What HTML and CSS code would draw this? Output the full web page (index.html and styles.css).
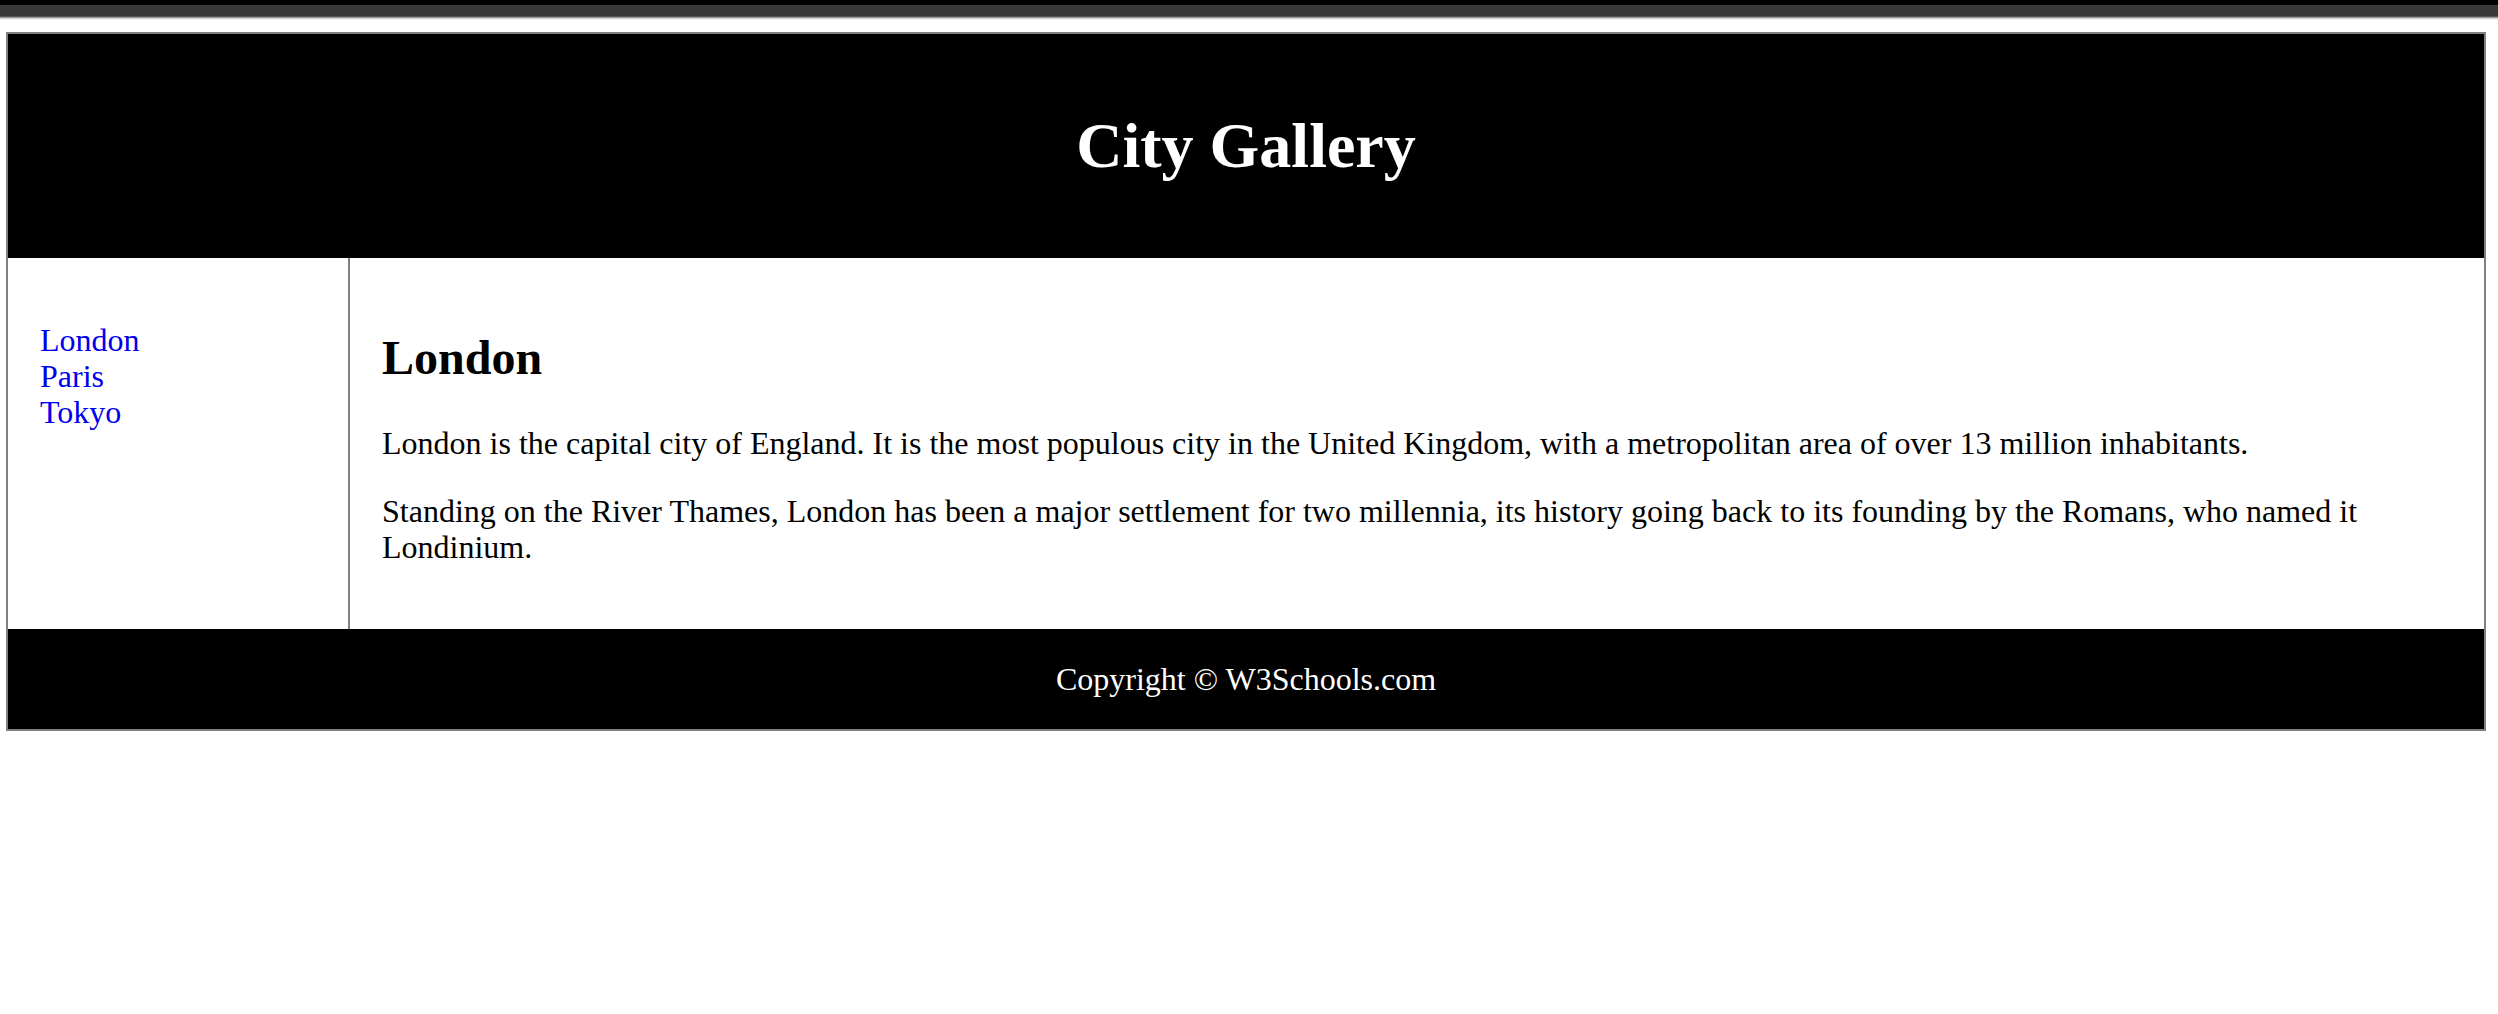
FILE: index.html
```html
<!DOCTYPE html>
<html>
<head>
<meta charset="utf-8">
<title>City Gallery</title>
<link rel="stylesheet" href="styles.css">
</head>
<body>
<div class="chrome"></div>
<div class="container">
  <header class="site-header">
    <h1 class="title">City Gallery</h1>
  </header>
  <div class="main">
    <nav class="side-nav">
      <ul class="nav-list">
        <li><a href="#">London</a></li>
        <li><a href="#">Paris</a></li>
        <li><a href="#">Tokyo</a></li>
      </ul>
    </nav>
    <article class="content">
      <h2 class="heading">London</h2>
      <p class="para">London is the capital city of England. It is the most populous city in the United Kingdom, with a metropolitan area of over 13 million inhabitants.</p>
      <p class="para">Standing on the River Thames, London has been a major settlement for two millennia, its history going back to its founding by the Romans, who named it Londinium.</p>
    </article>
  </div>
  <footer class="site-footer">Copyright © W3Schools.com</footer>
</div>
</body>
</html>
```

FILE: styles.css
```css
html, body {
  margin: 0;
  padding: 0;
  background: #fff;
}
body {
  font-family: "Liberation Serif", "Times New Roman", serif;
  font-size: 32px;
  line-height: 36px;
  color: #000;
}
.chrome {
  height: 20px;
  background: linear-gradient(to bottom,
    #000 0px, #000 5px,
    #393939 5px, #393939 16px,
    #555 16px, #555 17px,
    #9a9a9a 17px, #9a9a9a 18px,
    #d2d2d2 18px, #d2d2d2 19px,
    #f0f0f0 19px, #f0f0f0 20px);
}
.container {
  margin: 12px 12px 0 6px;
  border: 2px solid #808080;
}
.site-header,
.site-footer {
  padding: 32px;
  color: #fff;
  background: #000;
  text-align: center;
}
.title {
  font-size: 64px;
  font-weight: bold;
  margin: 42.88px 0;
  line-height: 74px;
}
.main {
  display: flex;
}
.side-nav {
  width: 340px;
  flex: none;
  padding: 32px;
  box-sizing: border-box;
}
.nav-list {
  list-style: none;
  margin: 32px 0;
  padding: 0;
}
.nav-list a {
  color: #0000ee;
  text-decoration: none;
}
.content {
  flex: 1;
  border-left: 2px solid #808080;
  padding: 32px;
  overflow: hidden;
}
.heading {
  font-size: 48px;
  font-weight: bold;
  margin: 39.84px 0;
  line-height: 56px;
}
.para {
  margin: 32px 0;
  line-height: 36px;
}
```
